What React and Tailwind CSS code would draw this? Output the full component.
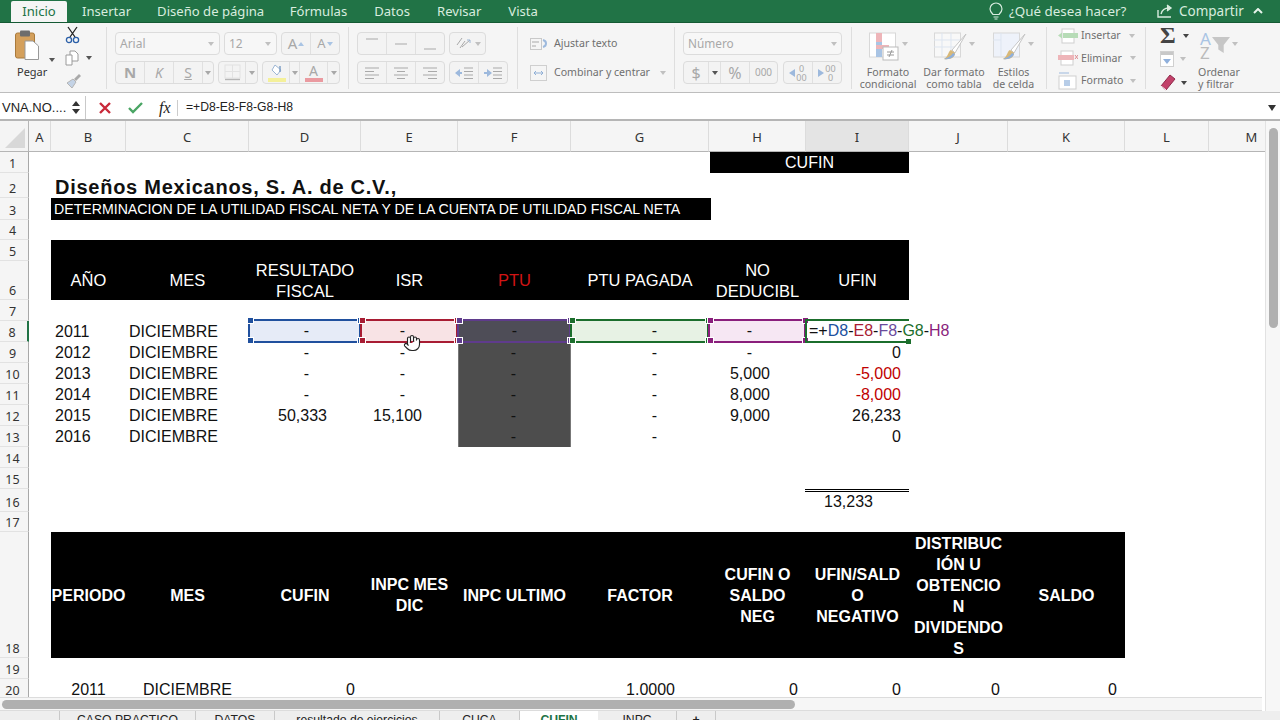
import React from "react";
import { Hand } from "lucide-react";

const Arrow = ({ c = "border-t-[#a8a8a8]", className = "" }) => (
  <span className={`inline-block w-0 h-0 border-x-[3px] border-x-transparent border-t-[4px] ${c} ${className}`} />
);

const Sep = () => <div className="w-px h-[62px] mt-[4px] bg-[#dedede] shrink-0" />;

const Lines = ({ kind }) => {
  const d = {
    left: "M2 3h14M2 6.5h9M2 10h14M2 13.5h9",
    center: "M2 3h14M5 6.5h8M2 10h14M5 13.5h8",
    right: "M2 3h14M7 6.5h9M2 10h14M7 13.5h9",
    top: "M3 3h12",
    mid: "M3 8h12",
    bot: "M3 13h12",
  }[kind];
  return (
    <svg width="18" height="16" viewBox="0 0 18 16" fill="none" stroke="#a9a9a9" strokeWidth="1"><path d={d} /></svg>
  );
};

const BtnBox = ({ className = "", children }) => (
  <div className={`flex items-stretch h-[23px] border border-[#dcdcdc] rounded-[4px] bg-[#f3f3f3] text-[#a8a8a8] ${className}`}>{children}</div>
);
const Seg = ({ className = "", children }) => (
  <div className={`flex items-center justify-center border-r border-[#e0e0e0] last:border-r-0 ${className}`}>{children}</div>
);

function Ribbon() {
  return (
    <div className="flex h-[70px] bg-[#f5f5f5] border-b border-[#bdbdbd] font-['Noto_Sans',sans-serif] overflow-hidden">
      {/* Portapapeles */}
      <div className="w-[106px] shrink-0 flex pl-[15px]">
        <div className="w-[34px] flex flex-col items-start pt-[7px]">
          <svg width="24" height="30" viewBox="0 0 24 30">
            <rect x="0.500" y="3" width="19" height="25" rx="2" fill="#d4a05c" stroke="#a97a3c" />
            <rect x="5" y="0.500" width="10" height="6" rx="1" fill="#6d6d6d" />
            <path d="M10 11h8l5.500 5v13.500H10z" fill="#fff" stroke="#999" />
          </svg>
          <span className="text-[11px] text-[#333] mt-[5px] ml-[2px] leading-[14px]">Pegar</span>
        </div>
        <div className="pt-[21px] pl-0"><Arrow c="border-t-[#555]" /></div>
        <div className="flex flex-col items-start pl-[10px] pt-[3px] gap-[6px]">
          <svg width="16" height="18" viewBox="0 0 16 18" fill="none" stroke="#222" strokeWidth="1.3">
            <path d="M3 1l7 10M12 1L5 11" />
            <circle cx="4" cy="14" r="2.600" stroke="#2b5fa8" />
            <circle cx="11" cy="14" r="2.600" stroke="#2b5fa8" />
          </svg>
          <div className="flex items-center gap-[6px]">
            <svg width="15" height="16" viewBox="0 0 15 16" fill="#fff" stroke="#9a9a9a"><path d="M5 1h5l3 3v7H5z" /><path d="M1 5h6v10H1z" /></svg>
            <Arrow c="border-t-[#555]" />
          </div>
          <svg width="17" height="16" viewBox="0 0 17 16" className="mt-[1px]">
            <path d="M9 6l5-5 2 2-5 5z" fill="#a9a9a9" />
            <path d="M2 10l6-4 3 3-4 6z" fill="#c4d3e6" stroke="#b5b5b5" />
          </svg>
        </div>
      </div>
      <Sep />
      {/* Fuente */}
      <div className="w-[241px] shrink-0 pl-[8px] pt-[9px] flex flex-col gap-[6px]">
        <div className="flex gap-[4px]">
          <BtnBox className="w-[105px] justify-between items-center! pl-[4px] pr-[5px] text-[12px] bg-[#f7f7f7]">Arial<Arrow c="border-t-[#c0c0c0]" /></BtnBox>
          <BtnBox className="w-[53px] justify-between items-center! pl-[4px] pr-[5px] text-[12px] bg-[#f7f7f7]">12<Arrow c="border-t-[#c0c0c0]" /></BtnBox>
          <BtnBox className="w-[59px]">
            <Seg className="w-[29px] gap-[1px] text-[15px]">A<span className="w-0 h-0 border-x-[3px] border-x-transparent border-b-[4px] border-b-[#a9c4e4]" /></Seg>
            <Seg className="flex-1 gap-[1px] text-[13px]">A<Arrow c="border-t-[#a9c4e4]" /></Seg>
          </BtnBox>
        </div>
        <div className="flex gap-[4px]">
          <BtnBox className="w-[99px] text-[14px]">
            <Seg className="w-[29px] font-bold text-[15px]">N</Seg>
            <Seg className="w-[29px] italic">K</Seg>
            <Seg className="w-[29px] underline">S</Seg>
            <Seg className="flex-1"><Arrow /></Seg>
          </BtnBox>
          <BtnBox className="w-[40px]">
            <Seg className="w-[27px]">
              <svg width="17" height="17" viewBox="0 0 17 17" fill="none" stroke="#e2e2e2"><rect x="1" y="1" width="15" height="13" /><path d="M8.500 1v13M1 7.500h15" /><path d="M1 15.500h15" stroke="#b5b5b5" strokeWidth="1.4" /></svg>
            </Seg>
            <Seg className="flex-1"><Arrow /></Seg>
          </BtnBox>
          <BtnBox className="w-[78px]">
            <Seg className="w-[27px] pl-[1px]">
              <svg width="20" height="19" viewBox="0 0 20 19"><path d="M8 2l6 5-4 5-5-5z" fill="#fff" stroke="#9db6d4" /><path d="M13 3v6" stroke="#7f9fc6" strokeWidth="1.500" /><rect x="1" y="15" width="18" height="4" fill="#f4f09a" /></svg>
            </Seg>
            <Seg className="w-[10px]"><Arrow /></Seg>
            <Seg className="w-[28px] flex-col justify-end text-[14px] leading-[12px]">A<span className="w-[18px] h-[4px] bg-[#ea9aa0] mb-[1px] mt-[1px]" /></Seg>
            <Seg className="flex-1"><Arrow /></Seg>
          </BtnBox>
        </div>
      </div>
      <Sep />
      {/* Alineación */}
      <div className="w-[168px] shrink-0 pl-[8px] pt-[9px] flex flex-col gap-[6px]">
        <div className="flex gap-[4px]">
          <BtnBox className="w-[88px]">
            <Seg className="w-[29px]"><Lines kind="top" /></Seg>
            <Seg className="w-[29px]"><Lines kind="mid" /></Seg>
            <Seg className="flex-1"><Lines kind="bot" /></Seg>
          </BtnBox>
          <BtnBox className="w-[37px] items-center! justify-center gap-[3px]">
            <svg width="17" height="15" viewBox="0 0 17 15" fill="none" stroke="#a9a9a9"><path d="M2 9l5-7M5 12l5-7M7 11l8-7" /><path d="M15 4l-3 0M15 4v3" stroke="#9db6d4" /></svg>
            <Arrow c="border-t-[#c0c0c0]" />
          </BtnBox>
        </div>
        <div className="flex gap-[4px]">
          <BtnBox className="w-[88px]">
            <Seg className="w-[29px]"><Lines kind="left" /></Seg>
            <Seg className="w-[29px]"><Lines kind="center" /></Seg>
            <Seg className="flex-1"><Lines kind="right" /></Seg>
          </BtnBox>
          <BtnBox className="w-[59px]">
            <Seg className="w-[29px]">
              <svg width="20" height="14" viewBox="0 0 20 14"><path d="M1 7l5-4v8z" fill="#9db9dd" /><path d="M5 6h3v2H5z" fill="#9db9dd" /><path d="M10 2h9M10 5.500h9M10 9h9M10 12.500h9" stroke="#a9a9a9" /></svg>
            </Seg>
            <Seg className="flex-1">
              <svg width="20" height="14" viewBox="0 0 20 14"><path d="M9 7L4 3v8z" fill="#9db9dd" /><path d="M1 6h3v2H1z" fill="#9db9dd" /><path d="M10 2h9M10 5.500h9M10 9h9M10 12.500h9" stroke="#a9a9a9" /></svg>
            </Seg>
          </BtnBox>
        </div>
      </div>
      <Sep />
      {/* Ajustar */}
      <div className="w-[156px] shrink-0 pl-[12px] pt-[9px] flex flex-col gap-[6px] text-[10.6px] text-[#6f6f6f]">
        <div className="flex items-center h-[23px] gap-[6px]">
          <svg width="18" height="14" viewBox="0 0 18 14" fill="none"><rect x="0.500" y="1.500" width="11" height="11" stroke="#c9c9c9" /><path d="M2 5h7M2 9h4" stroke="#a9a9a9" /><path d="M13 3c4 1 4 6 0 7" stroke="#9db9dd" strokeWidth="2" /></svg>
          Ajustar texto
        </div>
        <div className="flex items-center h-[23px] gap-[6px]">
          <svg width="18" height="16" viewBox="0 0 18 16" fill="none"><rect x="0.500" y="0.500" width="16" height="15" stroke="#cfcfcf" /><path d="M4 8h9" stroke="#8fafd6" /><path d="M4 8l2-2M4 8l2 2M13 8l-2-2M13 8l-2 2" stroke="#8fafd6" /></svg>
          Combinar y centrar
          <Arrow c="border-t-[#c0c0c0]" className="ml-[4px]" />
        </div>
      </div>
      <Sep />
      {/* Número */}
      <div className="w-[176px] shrink-0 pl-[8px] pt-[9px] flex flex-col gap-[6px]">
        <BtnBox className="w-[159px] justify-between items-center! px-[4px] text-[11.8px] bg-[#f7f7f7]">Número<Arrow c="border-t-[#c0c0c0]" /></BtnBox>
        <div className="flex gap-[5px]">
          <BtnBox className="w-[95px]">
            <Seg className="w-[25px] text-[16px]">$</Seg>
            <Seg className="w-[12px]"><Arrow c="border-t-[#555]" /></Seg>
            <Seg className="w-[29px] text-[16px]">%</Seg>
            <Seg className="flex-1 text-[10px]">000</Seg>
          </BtnBox>
          <BtnBox className="w-[59px]">
            <Seg className="w-[29px] text-[9px] leading-[9px]">
              <span className="w-0 h-0 border-y-[4px] border-y-transparent border-r-[6px] border-r-[#9db9dd] mr-[1px]" />
              <span className="text-center">0<br />00</span>
            </Seg>
            <Seg className="flex-1 text-[9px] leading-[9px]">
              <span className="w-0 h-0 border-y-[4px] border-y-transparent border-l-[6px] border-l-[#9db9dd] mr-[1px]" />
              <span className="text-center">00<br />0</span>
            </Seg>
          </BtnBox>
        </div>
      </div>
      <Sep />
      {/* Estilos */}
      <div className="w-[194px] shrink-0 flex text-[10.6px] leading-[12px] text-[#6f6f6f] text-center pl-[7px]">
        <div className="w-[58px] flex flex-col items-center pt-[9px]">
          <div className="h-[31px] flex items-start gap-[3px]">
            <svg width="30" height="30" viewBox="0 0 30 30" fill="none">
              <rect x="0.500" y="1" width="26" height="24" fill="#fff" stroke="#d8d8d8" />
              <rect x="7" y="1" width="6" height="9" fill="#eeb5b9" /><rect x="7" y="10" width="6" height="5" fill="#a9c4e4" /><rect x="7" y="13" width="13" height="4" fill="#eeb5b9" /><rect x="7" y="17" width="6" height="8" fill="#a9c4e4" />
              <rect x="14" y="15" width="15" height="13" fill="#fff" stroke="#bbb" /><path d="M18 20h7M18 23h7M20 25l3-7" stroke="#999" />
            </svg>
            <Arrow c="border-t-[#c0c0c0]" className="mt-[10px]" />
          </div>
          <span className="mt-[3px]">Formato<br />condicional</span>
        </div>
        <div className="w-[74px] flex flex-col items-center pt-[9px]">
          <div className="h-[31px] flex items-start gap-[1px]">
            <svg width="34" height="30" viewBox="0 0 34 30" fill="none">
              <rect x="0.500" y="1" width="26" height="24" fill="#f8f8f8" stroke="#d8d8d8" /><path d="M0 8h26M0 15h26M8 1v24M17 1v24" stroke="#dde5f0" />
              <path d="M32 2L18 18l3 3z" fill="#fff" stroke="#c5c5c5" /><path d="M17 18c-3 1-2 6-7 9 7 1 11-2 11-6z" fill="#d8b877" /><path d="M10 27c4-1 7-3 9-6l2 1c-1 3-5 6-11 5z" fill="#8fb0dc" />
            </svg>
            <Arrow c="border-t-[#c0c0c0]" className="mt-[10px]" />
          </div>
          <span className="mt-[3px]">Dar formato<br />como tabla</span>
        </div>
        <div className="w-[45px] flex flex-col items-center pt-[9px]">
          <div className="h-[31px] flex items-start gap-[1px]">
            <svg width="34" height="30" viewBox="0 0 34 30" fill="none">
              <rect x="0.500" y="1" width="26" height="24" fill="#eef2fa" stroke="#d8d8d8" /><path d="M0 8h8M8 1v24" stroke="#dde5f0" />
              <path d="M32 2L18 18l3 3z" fill="#fff" stroke="#c5c5c5" /><path d="M17 18c-3 1-2 6-7 9 7 1 11-2 11-6z" fill="#d8b877" /><path d="M10 27c4-1 7-3 9-6l2 1c-1 3-5 6-11 5z" fill="#8fb0dc" />
            </svg>
            <Arrow c="border-t-[#c0c0c0]" className="mt-[10px]" />
          </div>
          <span className="mt-[3px]">Estilos<br />de celda</span>
        </div>
      </div>
      <Sep />
      {/* Celdas */}
      <div className="w-[98px] shrink-0 flex flex-col pl-[11px] pt-[2px] text-[10.6px] text-[#6f6f6f]">
        <div className="flex items-center h-[23px] gap-[3px]">
          <svg width="20" height="16" viewBox="0 0 20 16" fill="none"><rect x="4" y="1" width="12" height="14" fill="#fff" stroke="#cfcfcf" /><rect x="5" y="5" width="15" height="5" fill="#b7dcb7" /><path d="M0 7.500l4-3v6z" fill="#b7dcb7" /></svg>
          Insertar<Arrow c="border-t-[#c0c0c0]" className="ml-[5px]" />
        </div>
        <div className="flex items-center h-[23px] gap-[3px]">
          <svg width="20" height="16" viewBox="0 0 20 16" fill="none"><rect x="3" y="1" width="12" height="14" fill="#fff" stroke="#cfcfcf" /><rect x="0" y="5" width="16" height="5" fill="#eeb5b9" /><path d="M17 5l3 4M20 5l-3 4" stroke="#dc8a90" /></svg>
          Eliminar<Arrow c="border-t-[#c0c0c0]" className="ml-[5px]" />
        </div>
        <div className="flex items-center h-[23px] gap-[3px]">
          <svg width="20" height="18" viewBox="0 0 20 18" fill="none"><path d="M1 1h10" stroke="#9db9dd" /><rect x="1" y="4" width="17" height="13" fill="#fff" stroke="#cfcfcf" /><rect x="6" y="8" width="6" height="6" fill="#b7cde8" /></svg>
          Formato<Arrow c="border-t-[#c0c0c0]" className="ml-[4px]" />
        </div>
      </div>
      <Sep />
      {/* Edición */}
      <div className="flex-1 flex pl-[14px] text-[10.6px] leading-[12px] text-[#6f6f6f]">
        <div className="w-[39px] flex flex-col pt-[4px] gap-[7px]">
          <div className="flex items-center gap-[7px]">
            <span className="text-[24px] leading-[17px] font-['Liberation_Serif',serif] font-bold text-[#444]">Σ</span>
            <Arrow c="border-t-[#444]" />
          </div>
          <div className="flex items-center gap-[6px]">
            <svg width="14" height="16" viewBox="0 0 14 16"><rect x="0.500" y="0.500" width="13" height="15" fill="#fff" stroke="#d0d0d0" /><rect x="1" y="1" width="12" height="3" fill="#c8c8c8" /><path d="M7 13L3 8h8z" fill="#8fb0dc" /></svg>
            <Arrow c="border-t-[#c0c0c0]" />
          </div>
          <div className="flex items-center gap-[5px]">
            <svg width="16" height="17" viewBox="0 0 16 17"><path d="M1 12L10 1l5 4-9 11z" fill="#c2426a" stroke="#8f2a4b" /><path d="M1 12l5 4" stroke="#fff" /></svg>
            <Arrow c="border-t-[#444]" />
          </div>
        </div>
        <div className="w-[40px] flex flex-col items-center pt-[9px]">
          <div className="flex items-start h-[28px]">
            <span className="flex flex-col text-[17px] leading-[14px] text-[#a9c4e4]">A<span className="text-[#bbb]">Z</span></span>
            <svg width="18" height="20" viewBox="0 0 20 22" className="mt-[3px] ml-[1px]"><path d="M0 2h20l-7 9v9l-6-4v-5z" fill="#c6c6c6" /></svg>
            <Arrow c="border-t-[#c0c0c0]" className="mt-[10px] ml-[2px]" />
          </div>
          <span className="mt-[6px]">Ordenar<br />y filtrar</span>
        </div>
      </div>
    </div>
  );
}

const rowClass = ["row-start-2","row-start-3","row-start-4","row-start-5","row-start-6","row-start-7","row-start-8","row-start-9","row-start-10","row-start-11","row-start-12","row-start-13","row-start-14","row-start-15","row-start-16","row-start-17","row-start-18","row-start-19","row-start-20","row-start-21"];
const cols = [["A","col-start-2"],["B","col-start-3"],["C","col-start-4"],["D","col-start-5"],["E","col-start-6"],["F","col-start-7"],["G","col-start-8"],["H","col-start-9"],["I","col-start-10"],["J","col-start-11"],["K","col-start-12"],["L","col-start-13"],["M","col-start-14"]];

const Cell = ({ className = "", children }) => (
  <div className={`flex items-center whitespace-nowrap ${className}`}>{children}</div>
);
const Handle = ({ c, className }) => (
  <span className={`absolute w-[7px] h-[7px] border border-white z-10 ${c} ${className}`} />
);
const Sel = ({ className, handle, children }) => (
  <div className={`relative flex items-center justify-end whitespace-nowrap border-2 -mt-[2px] -mb-[1px] -ml-[1px] ${className}`}>
    <Handle c={handle} className="-left-[3px] -top-[4px]" />
    <Handle c={handle} className="-right-[5px] -top-[4px]" />
    <Handle c={handle} className="-left-[3px] -bottom-[3px]" />
    <Handle c={handle} className="-right-[5px] -bottom-[3px]" />
    {children}
  </div>
);

function Sheet() {
  return (
    <div className="flex-1 overflow-hidden bg-white">
      <div className="grid grid-cols-[29px_22px_75px_123px_112px_97px_113px_138px_97px_103px_99px_117px_84px_86px] grid-rows-[31px_21px_25px_22px_20px_21px_39px_21px_21px_21px_21px_21px_21px_21px_21px_21px_23px_20px_126px_21px_21px] w-[1295px] font-['Liberation_Sans',sans-serif] text-[16px] text-[#111]">
        {/* encabezados */}
        <div className="col-start-1 row-start-1 bg-[#f4f4f4] border-r border-b border-[#b5b5b5] flex items-end justify-end pr-[3px] pb-[3px]">
          <span className="w-0 h-0 border-b-[20px] border-l-[20px] border-b-[#d8d8d8] border-l-transparent" />
        </div>
        {cols.map(([n, c]) => (
          <div key={n} className={`${c} row-start-1 ${n === "I" ? "bg-[#e4e4e4]" : "bg-[#f5f5f5]"} border-r border-b border-b-[#b5b5b5] border-r-[#dcdcdc] flex items-center justify-center pt-[3px] text-[13px] text-[#333] font-['Noto_Sans',sans-serif]`}>{n}</div>
        ))}
        {rowClass.map((r, i) => (
          <div key={r} className={`col-start-1 ${r} bg-[#f5f5f5] border-r ${i === 7 ? "border-r-2 border-r-[#217346] bg-[#e4e4e4]" : "border-r-[#a8a8a8]"} border-b border-b-[#e2e2e2] flex items-end justify-center pr-[3px] text-[12.5px] leading-[17px] text-[#333] font-['Noto_Sans',sans-serif]`}>{i + 1}</div>
        ))}

        {/* Títulos */}
        <Cell className="col-start-9 col-end-11 row-start-2 ml-[1px] bg-black text-white justify-center">CUFIN</Cell>
        <Cell className="col-start-3 col-end-10 row-start-3 pl-[4px] pt-[3px] text-[20px] font-bold tracking-[0.74px] text-[#111]">Diseños Mexicanos, S. A. de C.V.,</Cell>
        <Cell className="col-start-3 col-end-9 row-start-4 bg-black text-white text-[14.15px] pl-[3px] pt-[2px] mr-[-2px]">DETERMINACION DE LA UTILIDAD FISCAL NETA Y DE LA CUENTA DE UTILIDAD FISCAL NETA</Cell>

        {/* Cabecera 1 */}
        <div className="col-start-3 col-end-11 row-start-6 row-end-8 bg-black" />
        <Cell className="col-start-3 row-start-7 z-10 text-[16.5px] text-white justify-center">AÑO</Cell>
        <Cell className="col-start-4 row-start-7 z-10 text-[16.5px] text-white justify-center">MES</Cell>
        <Cell className="col-start-5 row-start-7 z-10 text-[16.5px] text-white justify-center text-center whitespace-normal leading-[21px]">RESULTADO<br />FISCAL</Cell>
        <Cell className="col-start-6 row-start-7 z-10 text-[16.5px] text-white justify-center">ISR</Cell>
        <Cell className="col-start-7 row-start-7 z-10 text-[16.5px] text-[#d01414] justify-center">PTU</Cell>
        <Cell className="col-start-8 row-start-7 z-10 text-[16.5px] text-white justify-center">PTU PAGADA</Cell>
        <Cell className="col-start-9 row-start-7 z-10 text-[16.5px] text-white justify-center text-center leading-[21px]">NO<br />DEDUCIBL</Cell>
        <Cell className="col-start-10 row-start-7 z-10 text-[16.5px] text-white justify-center">UFIN</Cell>

        {/* Años y meses */}
        <Cell className="col-start-3 row-start-9 pl-[4px]">2011</Cell><Cell className="col-start-4 row-start-9 pl-[3px]">DICIEMBRE</Cell>
        <Cell className="col-start-3 row-start-10 pl-[4px]">2012</Cell><Cell className="col-start-4 row-start-10 pl-[3px]">DICIEMBRE</Cell>
        <Cell className="col-start-3 row-start-11 pl-[4px]">2013</Cell><Cell className="col-start-4 row-start-11 pl-[3px]">DICIEMBRE</Cell>
        <Cell className="col-start-3 row-start-12 pl-[4px]">2014</Cell><Cell className="col-start-4 row-start-12 pl-[3px]">DICIEMBRE</Cell>
        <Cell className="col-start-3 row-start-13 pl-[4px]">2015</Cell><Cell className="col-start-4 row-start-13 pl-[3px]">DICIEMBRE</Cell>
        <Cell className="col-start-3 row-start-14 pl-[4px]">2016</Cell><Cell className="col-start-4 row-start-14 pl-[3px]">DICIEMBRE</Cell>

        {/* Rangos de la fórmula */}
        <Sel className="col-start-5 row-start-9 bg-[#e6ebf7] border-[#20509e] pr-[50px]" handle="bg-[#20509e]">-</Sel>
        <Sel className="col-start-6 row-start-9 bg-[#f8e3e5] border-[#a81c33] pr-[51px]" handle="bg-[#a81c33]">-</Sel>
        <Sel className="col-start-7 row-start-9 bg-[#4e4d57] border-[#5f3b8c] pr-[52px]" handle="bg-[#5f3b8c]">-</Sel>
        <Sel className="col-start-8 row-start-9 bg-[#e7f2e4] border-[#1b6e2c] pr-[50px]" handle="bg-[#1b6e2c]">-</Sel>
        <Sel className="col-start-9 row-start-9 bg-[#f6e7f3] border-[#8a1f7c] pr-[52px]" handle="bg-[#8a1f7c]">-</Sel>
        <div className="col-start-10 row-start-9 relative flex items-center whitespace-nowrap border-y-2 border-l-2 border-[#1b6e2c] -mt-[2px] -mb-[1px] -ml-[1px] pl-[2px] z-20">
          <span>=+<span className="text-[#20509e]">D8</span>-<span className="text-[#a81c33]">E8</span>-<span className="text-[#6a4a9c]">F8</span>-<span className="text-[#1b6e2c]">G8</span>-<span className="text-[#8a1f7c]">H8</span></span>
          <span className="absolute -right-[2px] -bottom-[3px] w-[5px] h-[5px] bg-[#1b6e2c]" />
        </div>
        <Cell className="col-start-10 row-start-10 justify-end pr-[8px]">0</Cell>

        {/* Datos */}
        <Cell className="col-start-5 row-start-10 justify-end pr-[52px]">-</Cell>
        <Cell className="col-start-6 row-start-10 justify-end pr-[53px]">-</Cell>
        <Cell className="col-start-8 row-start-10 justify-end pr-[52px]">-</Cell>
        <Cell className="col-start-9 row-start-10 justify-end pr-[54px]">-</Cell>
        <Cell className="col-start-5 row-start-11 justify-end pr-[52px]">-</Cell>
        <Cell className="col-start-6 row-start-11 justify-end pr-[53px]">-</Cell>
        <Cell className="col-start-8 row-start-11 justify-end pr-[52px]">-</Cell>
        <Cell className="col-start-9 row-start-11 justify-end pr-[36px]">5,000</Cell>
        <Cell className="col-start-10 row-start-11 justify-end pr-[8px] text-[#c00000]">-5,000</Cell>
        <Cell className="col-start-5 row-start-12 justify-end pr-[52px]">-</Cell>
        <Cell className="col-start-6 row-start-12 justify-end pr-[53px]">-</Cell>
        <Cell className="col-start-8 row-start-12 justify-end pr-[52px]">-</Cell>
        <Cell className="col-start-9 row-start-12 justify-end pr-[36px]">8,000</Cell>
        <Cell className="col-start-10 row-start-12 justify-end pr-[8px] text-[#c00000]">-8,000</Cell>
        <Cell className="col-start-5 row-start-13 justify-end pr-[34px]">50,333</Cell>
        <Cell className="col-start-6 row-start-13 justify-end pr-[36px]">15,100</Cell>
        <Cell className="col-start-8 row-start-13 justify-end pr-[52px]">-</Cell>
        <Cell className="col-start-9 row-start-13 justify-end pr-[36px]">9,000</Cell>
        <Cell className="col-start-10 row-start-13 justify-end pr-[8px]">26,233</Cell>
        <Cell className="col-start-8 row-start-14 justify-end pr-[52px]">-</Cell>
        <Cell className="col-start-10 row-start-14 justify-end pr-[8px]">0</Cell>

        {/* PTU oscuro */}
        <Cell className="col-start-7 row-start-10 bg-[#4d4d4d] justify-end pr-[54px] border-x border-[#777]">-</Cell>
        <Cell className="col-start-7 row-start-11 bg-[#4d4d4d] justify-end pr-[54px] border-x border-[#777]">-</Cell>
        <Cell className="col-start-7 row-start-12 bg-[#4d4d4d] justify-end pr-[54px] border-x border-[#777]">-</Cell>
        <Cell className="col-start-7 row-start-13 bg-[#4d4d4d] justify-end pr-[54px] border-x border-[#777]">-</Cell>
        <Cell className="col-start-7 row-start-14 bg-[#4d4d4d] justify-end pr-[54px] border-x border-[#777]">-</Cell>

        {/* Total */}
        <Cell className="col-start-10 row-start-17 justify-end pr-[36px] -ml-[1px] border-t-[3px] border-double border-black">13,233</Cell>

        {/* Cabecera 2 */}
        <div className="col-start-3 col-end-13 row-start-19 bg-black" />
        <Cell className="col-start-3 row-start-19 z-10 pt-[2px] text-white font-bold justify-center">PERIODO</Cell>
        <Cell className="col-start-4 row-start-19 z-10 pt-[2px] text-white font-bold justify-center">MES</Cell>
        <Cell className="col-start-5 row-start-19 z-10 pt-[2px] text-white font-bold justify-center">CUFIN</Cell>
        <Cell className="col-start-6 row-start-19 z-10 text-white font-bold justify-center text-center leading-[21px]">INPC MES<br />DIC</Cell>
        <Cell className="col-start-7 row-start-19 z-10 pt-[2px] text-white font-bold justify-center">INPC ULTIMO</Cell>
        <Cell className="col-start-8 row-start-19 z-10 pt-[2px] text-white font-bold justify-center">FACTOR</Cell>
        <Cell className="col-start-9 row-start-19 z-10 text-white font-bold justify-center text-center leading-[21px]">CUFIN O<br />SALDO<br />NEG</Cell>
        <Cell className="col-start-10 row-start-19 z-10 text-white font-bold justify-center text-center leading-[21px]">UFIN/SALD<br />O<br />NEGATIVO</Cell>
        <Cell className="col-start-11 row-start-19 z-10 pt-[2px] text-white font-bold justify-center text-center leading-[21px]">DISTRIBUC<br />IÓN U<br />OBTENCIO<br />N<br />DIVIDENDO<br />S</Cell>
        <Cell className="col-start-12 row-start-19 z-10 pt-[2px] text-white font-bold justify-center">SALDO</Cell>

        {/* Fila 20 */}
        <Cell className="col-start-3 row-start-21 justify-center">2011</Cell>
        <Cell className="col-start-4 row-start-21 justify-center">DICIEMBRE</Cell>
        <Cell className="col-start-5 row-start-21 justify-end pr-[6px]">0</Cell>
        <Cell className="col-start-8 row-start-21 justify-end pr-[34px]">1.0000</Cell>
        <Cell className="col-start-9 row-start-21 justify-end pr-[8px]">0</Cell>
        <Cell className="col-start-10 row-start-21 justify-end pr-[8px]">0</Cell>
        <Cell className="col-start-11 row-start-21 justify-end pr-[8px]">0</Cell>
        <Cell className="col-start-12 row-start-21 justify-end pr-[8px]">0</Cell>
      </div>
    </div>
  );
}

export default function App() {
  return (
    <div className="w-[1280px] h-[720px] overflow-hidden flex flex-col relative bg-white">
      {/* Pestañas de cinta */}
      <div className="flex h-[23px] bg-[#217346] border-b border-[#155a34] pl-[11px] text-[13.1px] font-['Noto_Sans',sans-serif] text-[#d8ecdf] items-stretch shrink-0">
        <div className="w-[56px] mt-[1px] bg-[#f5f5f5] rounded-t-[2px] text-[#217346] flex items-center justify-center">Inicio</div>
        <div className="pl-[15px] pr-[13px] pt-[1px] flex items-center">Insertar</div>
        <div className="pl-[13px] pr-[12px] pt-[1px] flex items-center">Diseño de página</div>
        <div className="px-[13.5px] pt-[1px] flex items-center">Fórmulas</div>
        <div className="px-[13.5px] pt-[1px] flex items-center">Datos</div>
        <div className="px-[13.5px] pt-[1px] flex items-center">Revisar</div>
        <div className="px-[13.5px] pt-[1px] flex items-center">Vista</div>
        <div className="ml-auto flex items-center pr-[17px]">
          <svg width="14" height="18" viewBox="0 0 14 18" fill="none" stroke="#d8ecdf" strokeWidth="1.2"><path d="M4 12.500C2 10.500 1 9 1 7a6 6 0 0112 0c0 2-1 3.500-3 5.500z" /><path d="M4.500 15h5M5.500 17h3" /></svg>
          <span className="ml-[6px] w-[148px] text-[13.4px]">¿Qué desea hacer?</span>
          <svg width="17" height="14" viewBox="0 0 17 14" fill="none" stroke="#d8ecdf" strokeWidth="1.4"><path d="M1 6v7h13" /><path d="M4 10c1-4 4-6 8-6" /><path d="M10 1l4 3-4 3" fill="#d8ecdf" /></svg>
          <span className="ml-[5px] w-[74px] text-[13.5px]">Compartir</span>
          <svg width="10" height="6" viewBox="0 0 10 6" fill="none" stroke="#e6f3ea" strokeWidth="2"><path d="M1 5l4-4 4 4" /></svg>
        </div>
      </div>
      <Ribbon />
      {/* Barra de fórmulas */}
      <div className="flex items-center h-[28px] pt-[3px] bg-white border-b-2 border-[#b5b5b5] shrink-0 font-['Liberation_Sans',sans-serif] text-[13px] text-[#222]">
        <div className="w-[86px] h-full flex items-center justify-between pl-[2px] pr-[5px] border-r border-[#c9c9c9]">
          <span className="text-[13px]">VNA.NO....</span>
          <span className="flex flex-col gap-[3px]">
            <span className="w-0 h-0 border-x-[4px] border-x-transparent border-b-[5px] border-b-[#333]" />
            <span className="w-0 h-0 border-x-[4px] border-x-transparent border-t-[5px] border-t-[#333]" />
          </span>
        </div>
        <svg width="12" height="12" viewBox="0 0 12 12" className="ml-[13px]" fill="none" stroke="#c9293a" strokeWidth="2.4"><path d="M1 1l10 10M11 1L1 11" /></svg>
        <svg width="15" height="12" viewBox="0 0 15 12" className="ml-[17px]" fill="none" stroke="#4aa564" strokeWidth="2.4"><path d="M1 6l4 4 9-9" /></svg>
        <span className="ml-[16px] w-[17px] font-['Liberation_Serif',serif] italic text-[16px] text-[#222]">fx</span>
        <span className="w-px h-[16px] bg-[#ccc] ml-[1px]" />
        <span className="ml-[8px] text-[12.2px]">=+D8-E8-F8-G8-H8</span>
        <span className="ml-auto mr-[4px] w-0 h-0 border-x-[4px] border-x-transparent border-t-[6px] border-t-[#333]" />
      </div>
      {/* Hoja */}
      <div className="flex flex-1 min-h-0">
        <div className="flex flex-col flex-1 min-w-0">
          <Sheet />
          <div className="h-[14px] shrink-0 bg-[#f6f6f6] border-y border-[#dcdcdc] flex items-center pl-[2px] mr-[3px]">
            <div className="w-[793px] h-[9px] rounded-full bg-[#b0b0b0]" />
          </div>
        </div>
        <div className="w-[15px] shrink-0 bg-[#f7f7f7] border-l border-[#e2e2e2] pl-[3px] pt-[7px]">
          <div className="w-[9px] h-[200px] rounded-full bg-[#b0b0b0]" />
        </div>
      </div>
      {/* Hojas */}
      <div className="flex h-[9px] shrink-0 bg-[#eeeeee] text-[12.2px] leading-[15px] text-[#222] font-['Liberation_Sans',sans-serif] overflow-hidden">
        <div className="w-[60px] border-r border-[#c9c9c9]" />
        <div className="w-[136px] border-r border-[#c9c9c9] text-center pt-[2px]">CASO PRACTICO</div>
        <div className="w-[79px] border-r border-[#c9c9c9] text-center pt-[2px]">DATOS</div>
        <div className="w-[165px] border-r border-[#c9c9c9] text-center pt-[2px]">resultado de ejercicios</div>
        <div className="w-[80px] border-r border-[#c9c9c9] text-center pt-[2px]">CUCA</div>
        <div className="w-[78px] bg-white text-[#217346] font-bold text-center pt-[2px]">CUFIN</div>
        <div className="w-[79px] border-r border-[#c9c9c9] text-center pt-[2px]">INPC</div>
        <div className="w-[39px] border-r border-[#c9c9c9] text-center font-bold pt-[2px]">+</div>
      </div>
      {/* Cursor */}
      <Hand size={18} className="absolute left-[403px] top-[334px] z-30 text-[#222] fill-white" strokeWidth={1.5} />
    </div>
  );
}
